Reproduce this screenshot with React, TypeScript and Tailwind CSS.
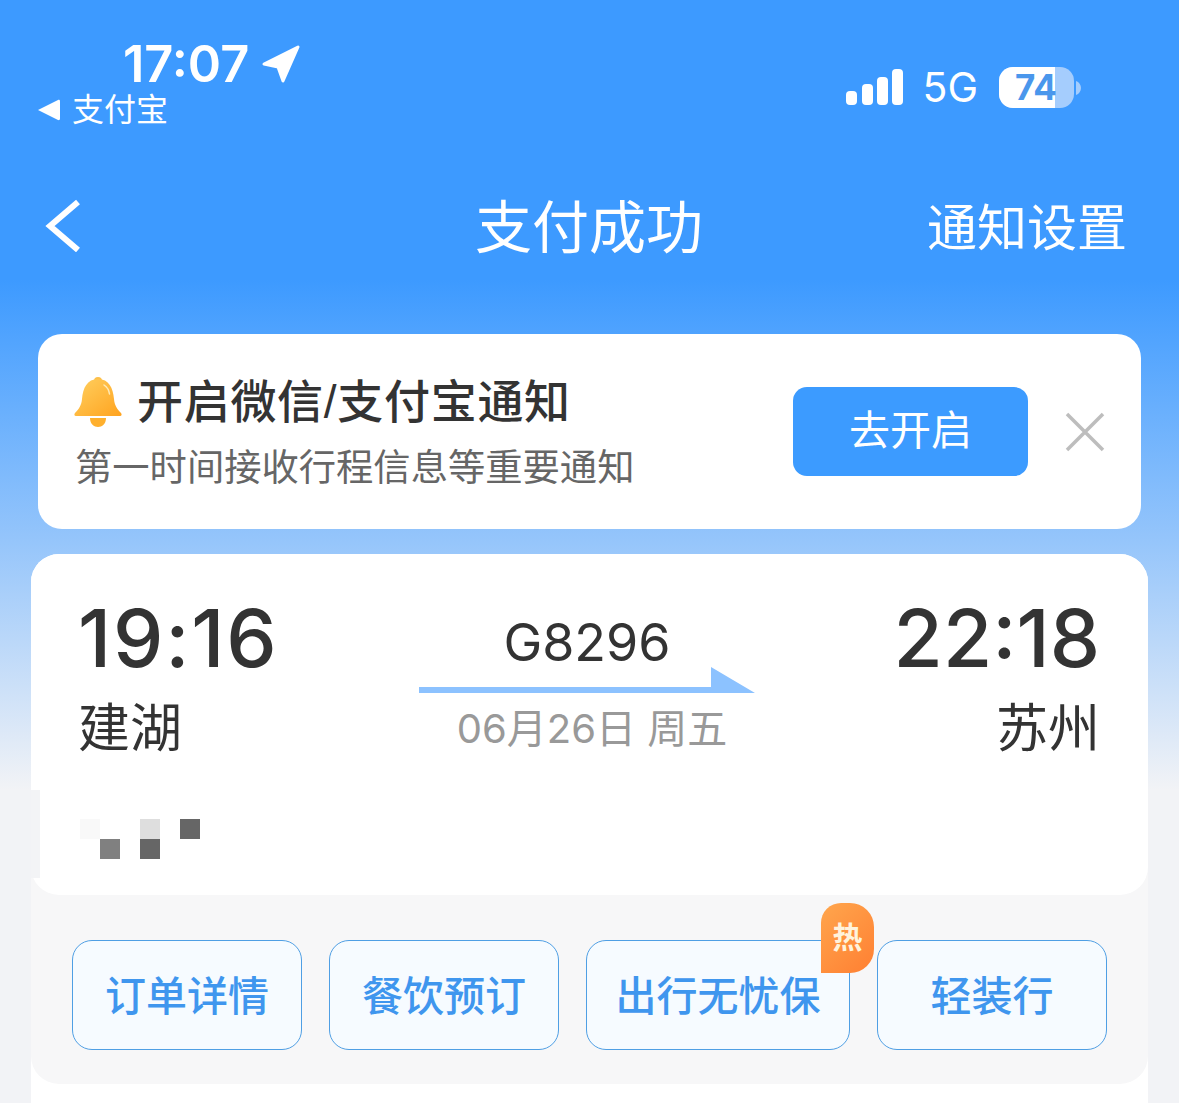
import React from "react";

const cjk = { fontFamily: '"Liberation Sans","Noto Sans CJK SC",sans-serif' };
const inter = { fontFamily: 'Inter,"Noto Sans CJK SC",sans-serif' };

function Btn({ w, children }: { w: string; children: React.ReactNode }) {
  return (
    <div className={`${w} h-[110px] rounded-[20px] border border-[#4f9fe4] bg-[#f6fbff] flex items-center justify-center pt-[4px] text-[41px] leading-none font-medium text-[#3f96ee] whitespace-nowrap`}>
      {children}
    </div>
  );
}

export default function App() {
  return (
    <div
      className="relative w-[1179px] h-[1103px] overflow-hidden bg-[linear-gradient(180deg,#3d9aff_0px,#3d9aff_280px,#95c5fb_540px,#f2f3f6_790px,#f2f3f6_1103px)]"
      style={cjk}
    >
      {/* Status bar */}
      <div className="h-[160px] flex justify-between text-white">
        <div className="pl-[38px] pt-[37px]">
          <div className="flex items-center pl-[85px] h-[54px]">
            <span className="text-[50.500px] leading-none font-semibold font-['Inter']">17:07</span>
            <svg className="ml-[12px]" width="40" height="40" viewBox="0 0 40 40" fill="#fff" stroke="#fff" strokeWidth="3" strokeLinejoin="round">
              <path d="M3 20 37 3 22 37 17 23Z" />
            </svg>
          </div>
          <div className="flex items-center h-[38px]">
            <svg width="22" height="24" viewBox="0 0 22 24" fill="#fff">
              <path d="M0 12 20 2c1-.4 2 .2 2 1.200v17.600c0 1-1 1.600-2 1.200Z" />
            </svg>
            <span className="ml-[12px] text-[32px] leading-none">支付宝</span>
          </div>
        </div>
        <div className="flex items-center pr-[97px] pt-[15px] h-[160px]">
          <svg className="mb-[2px]" width="58" height="38" viewBox="0 0 58 38" fill="#fff">
            <rect x="1" y="23" width="11" height="14" rx="4" />
            <rect x="17" y="16" width="11" height="21" rx="4" />
            <rect x="32" y="9" width="11" height="28" rx="4" />
            <rect x="47" y="1" width="11" height="36" rx="4" />
          </svg>
          <span className="ml-[19px] text-[41px] leading-none font-['Inter']">5G</span>
          <div className="relative ml-[21px] w-[75px] h-[41px] rounded-[14px] bg-[#a5cdfd] overflow-hidden">
            <div className="absolute inset-y-0 left-0 w-[56px] bg-white" />
            <span className="absolute left-[16px] top-[4px] text-[35px] leading-[33px] font-bold text-[#4a97ec] font-['Inter']">74</span>
          </div>
          <svg className="ml-[2px]" width="6" height="14" viewBox="0 0 6 14" fill="#a5cdfd">
            <path d="M0 0c3 1 5 4 5 7s-2 6-5 7Z" />
          </svg>
        </div>
      </div>

      {/* Nav */}
      <div className="h-[174px] flex items-start pl-[44px] pr-[52px] text-white">
        <svg className="mt-[38px] shrink-0" width="38" height="54" viewBox="0 0 38 54" fill="none" stroke="#fff" strokeWidth="6">
          <path d="M34 4 6 28l28 24" />
        </svg>
        <span className="ml-[393px] mt-[36px] text-[57px] leading-[64px] whitespace-nowrap">支付成功</span>
        <span className="ml-auto mt-[40px] text-[50px] leading-[58px] whitespace-nowrap">通知设置</span>
      </div>

      {/* Notification */}
      <div className="mx-[38px] h-[195px] rounded-[24px] bg-white flex items-center">
        <svg className="ml-[35px] mb-[58px] shrink-0" width="50" height="54" viewBox="0 0 50 54">
          <defs>
            <linearGradient id="bell" x1="0" y1="0" x2="1" y2="1">
              <stop offset="0" stopColor="#ffd060" />
              <stop offset="1" stopColor="#ffa31f" />
            </linearGradient>
          </defs>
          <circle cx="25" cy="5" r="4" fill="#fdc04a" />
          <path d="M25 3c11 0 15 9 16 20 .5 6 3 10 7 14 1 1 .8 3-1 3H3c-1.800 0-2-2-1-3 4-4 6.500-8 7-14C10 12 14 3 25 3Z" fill="url(#bell)" />
          <path d="M17 42h16c0 6-4 9-8 9s-8-3-8-9Z" fill="#ffb02e" />
          <path d="M31 9c3 2 5 5 5.500 9" fill="none" stroke="#ffe9b5" strokeWidth="1.500" strokeLinecap="round" />
        </svg>
        <div className="ml-[14px] w-[640px] pt-[3px]">
          <div className="text-[46px] leading-[56px] tracking-[0.7px] text-[#333] font-medium whitespace-nowrap">开启微信/支付宝通知</div>
          <div className="-ml-[62px] mt-[14px] text-[37.300px] leading-[48px] text-[#666] whitespace-nowrap">第一时间接收行程信息等重要通知</div>
        </div>
        <div className="ml-[16px] w-[235px] h-[89px] shrink-0 rounded-[14px] bg-[#3c9bff] flex items-center justify-center text-white text-[41px] leading-none">去开启</div>
        <svg className="ml-[37px] shrink-0" width="40" height="40" viewBox="0 0 40 40" stroke="#bdbdbd" strokeWidth="3.500" fill="none">
          <path d="M2 2l36 36M38 2 2 38" />
        </svg>
      </div>

      {/* Train card */}
      <div className="relative mx-[31px] mt-[25px] bg-white rounded-t-[28px] h-[560px]">
        <div className="relative z-10 h-[341px] rounded-[28px] bg-white">
          <div className="flex pl-[47px] pr-[48px] pt-[42px]">
            <div className="w-[341px] shrink-0">
              <div className="text-[80px] leading-[84px] tracking-[1.800px] font-medium text-[#333]" style={inter}>19:16</div>
              <div className="mt-[19px] text-[52px] leading-[60px] text-[#333]">建湖</div>
            </div>
            <div className="flex flex-col items-center w-[336px] shrink-0">
              <div className="pt-[15px] text-[52px] leading-[64px] text-[#333]" style={inter}>G8296</div>
              <svg className="mt-[-8px]" width="336" height="26" viewBox="0 0 336 26" fill="#8cc2ff">
                <path d="M0 20h292V0l44 26H0Z" />
              </svg>
              <div className="mt-[11px] ml-[10px] text-[40px] leading-[50px] text-[#999] whitespace-nowrap" style={inter}>06月26日 周五</div>
            </div>
            <div className="flex-1 text-right">
              <div className="text-[80px] leading-[84px] font-medium text-[#333] whitespace-nowrap" style={inter}>22:18</div>
              <div className="mt-[19px] text-[52px] leading-[60px] text-[#333]">苏州</div>
            </div>
          </div>
          {/* mosaic */}
          <div className="mt-[60px] ml-[49px] grid grid-cols-[repeat(6,20px)] grid-rows-[20px_20px] w-[120px]">
            <div className="bg-[#f9f9f9]" />
            <div />
            <div />
            <div className="bg-[#dedede]" />
            <div />
            <div className="bg-[#666]" />
            <div />
            <div className="bg-[#808080]" />
            <div />
            <div className="bg-[#666]" />
          </div>
          <div className="absolute left-0 top-[236px] w-[9px] h-[88px] bg-[#f3f4f6]" />
        </div>
        <div className="-mt-[28px] h-[217px] bg-[#f7f7f8] rounded-b-[28px] flex gap-[27px] pl-[41px] pt-[73px]">
          <Btn w="w-[230px]">订单详情</Btn>
          <Btn w="w-[230px]">餐饮预订</Btn>
          <div className="relative">
            <Btn w="w-[264px]">出行无忧保</Btn>
            <div className="absolute z-10 left-[235px] top-[-37px] w-[53px] h-[70px] rounded-tl-[20px] rounded-tr-[24px] rounded-br-[24px] bg-[linear-gradient(135deg,#ffa64d,#ff7f32)] flex items-center justify-center text-[30px] leading-none font-bold text-[#fff3dc]">热</div>
          </div>
          <Btn w="w-[230px]">轻装行</Btn>
        </div>
      </div>
    </div>
  );
}
